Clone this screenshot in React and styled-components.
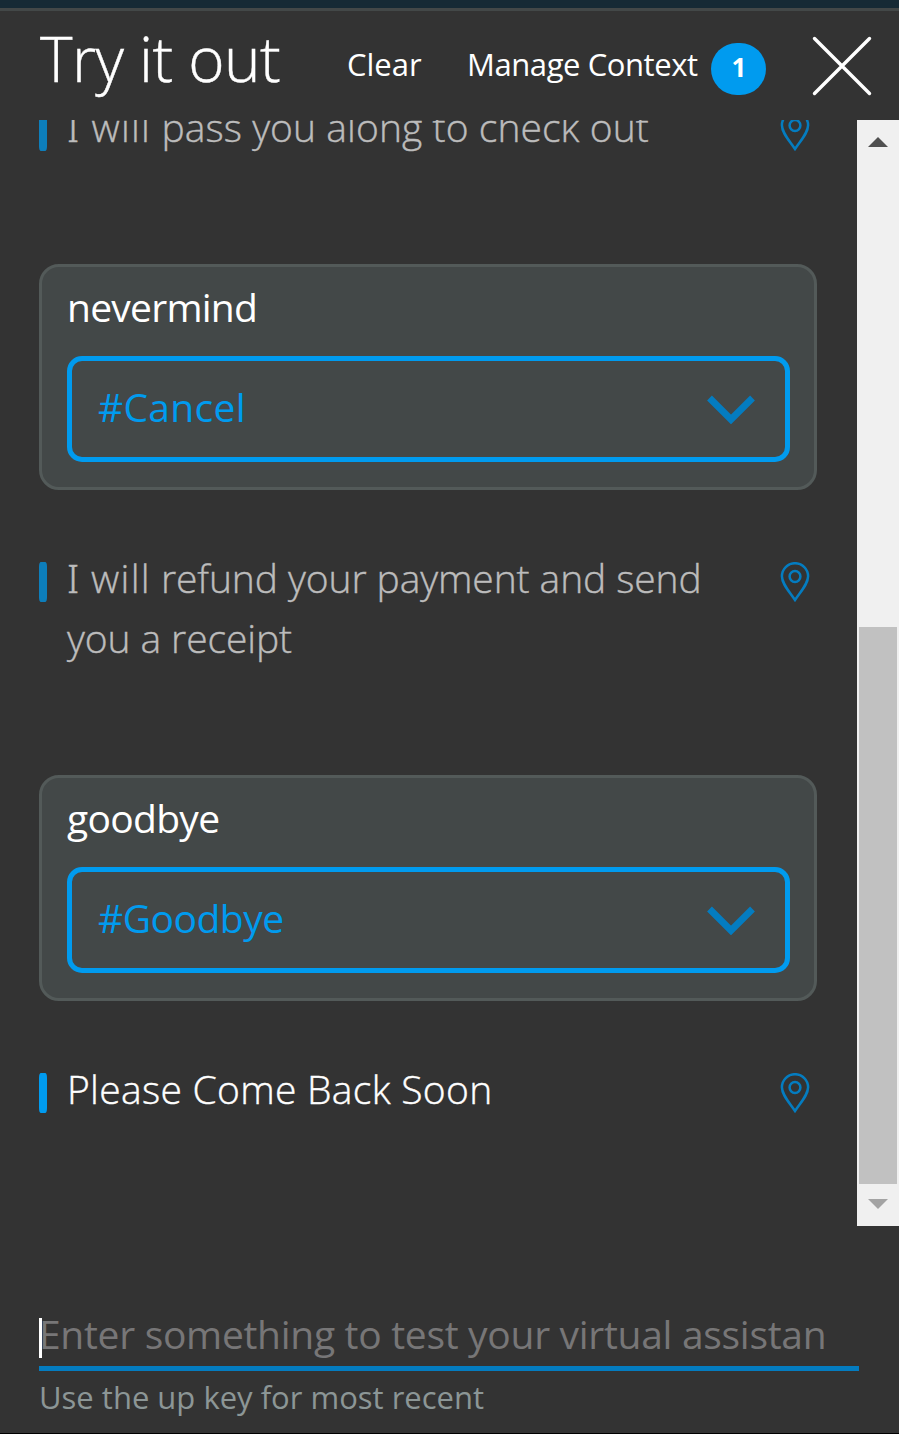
import React from 'react';
import styled, { createGlobalStyle } from 'styled-components';

const GlobalStyle = createGlobalStyle`
  * { box-sizing: border-box; }
  body { margin: 0; background: #333333; font-family: "Open Sans", "Noto Sans", sans-serif; }
`;

const Panel = styled.div`
  display: flex;
  flex-direction: column;
  width: 899px;
  height: 1434px;
  overflow: hidden;
  background: #333333;
  color: #fff;
  border-bottom: 1px solid #000;
`;

const TopStrip = styled.div`
  flex: none;
  height: 11px;
  background: #162a35;
  border-bottom: 3px solid #434848;
`;

const Header = styled.header`
  flex: none;
  display: flex;
  align-items: flex-start;
  height: 109px;
  padding-left: 40px;
`;

const Title = styled.h1`
  margin: 2px 0 0;
  width: 307px;
  font-size: 62px;
  line-height: 90px;
  font-weight: 300;
  letter-spacing: -0.55px;
  white-space: nowrap;
  -webkit-text-stroke: 0.4px currentColor;
`;

const TextButton = styled.button`
  width: ${p => p.$width}px;
  margin: 30px 0 0;
  padding: 0;
  border: 0;
  background: none;
  color: #fff;
  text-align: left;
  white-space: nowrap;
  font: 400 31px/46px "Open Sans", "Noto Sans", sans-serif;
  letter-spacing: ${p => p.$spacing || 0}px;
`;

const Badge = styled.span`
  width: 55px;
  height: 52px;
  margin: 32px 46px 0 0;
  padding-left: 1px;
  border-radius: 26px;
  background: #009bef;
  text-align: center;
  font-size: 26px;
  line-height: 48px;
  font-weight: 700;
`;

const CloseIcon = styled.svg`
  width: 60px;
  height: 60px;
  margin-top: 25px;
`;

const Conversation = styled.div`
  flex: none;
  display: flex;
  height: 1106px;
`;

const Messages = styled.main`
  flex: 1;
  height: 1106px;
  overflow: hidden;
  padding: 0 40px 0 39px;
`;

const Thread = styled.div`
  display: flex;
  flex-direction: column;
  margin-top: -23px;
`;

const Reply = styled.div`
  display: flex;
  align-items: flex-start;
  margin-bottom: 107px;
`;

const Marker = styled.span`
  flex: none;
  width: 8px;
  height: 40px;
  margin: 14px 20px 0 0;
  border-radius: 2px / 5px;
  background: #009bef;
  opacity: ${p => (p.$past ? 0.73 : 1)};
`;

const ReplyText = styled.p`
  flex: 1;
  margin: 0;
  font-size: 39px;
  line-height: 60px;
  font-weight: 300;
  color: ${p => (p.$past ? '#bcbcbc' : '#fff')};
  -webkit-text-stroke: 0.4px currentColor;
`;

const ReplyLine = styled.span`
  display: block;
  white-space: nowrap;
  letter-spacing: ${p => p.$spacing || 0}px;
`;

const SerifI = styled.span`
  margin-right: 2px;
  font-family: "Noto Sans", sans-serif;
`;

const WideWord = styled.span`
  letter-spacing: 1.3px;
`;

const PinIcon = styled.svg`
  flex: none;
  width: 30px;
  height: 41px;
  margin: 14px 7px 0 0;
`;

const Card = styled.section`
  height: 226px;
  margin-bottom: 58px;
  padding: 12px 24px 0 25px;
  border: 3px solid #535a59;
  border-radius: 20px;
  background: #434848;
`;

const Utterance = styled.div`
  height: 77px;
  font-size: 39px;
  line-height: 56px;
  letter-spacing: ${p => p.$spacing}px;
`;

const IntentSelect = styled.button`
  display: flex;
  align-items: center;
  justify-content: space-between;
  width: 723px;
  height: 106px;
  padding: 0 30px 0 26px;
  border: 5px solid #009bef;
  border-radius: 15px;
  background: none;
  color: #009bef;
`;

const IntentName = styled.span`
  padding-bottom: 4px;
  font: 400 39px/56px "Open Sans", "Noto Sans", sans-serif;
  letter-spacing: ${p => p.$spacing}px;
`;

const ChevronIcon = styled.svg`
  width: 48px;
  height: 30px;
`;

const Scrollbar = styled.div`
  flex: none;
  display: flex;
  flex-direction: column;
  align-items: center;
  justify-content: space-between;
  width: 42px;
  background: #f0f0f0;
  padding: 17px 0;
`;

const Thumb = styled.div`
  width: 38px;
  height: 557px;
  margin-top: 465px;
  background: #c1c1c1;
`;

const ArrowIcon = styled.svg`
  width: 20px;
  height: 10px;
`;

const Footer = styled.footer`
  padding: 85px 40px 0 39px;
`;

const InputRow = styled.div`
  display: flex;
  align-items: flex-start;
  height: 60px;
  border-bottom: 5px solid #047cc0;
`;

const Caret = styled.span`
  width: 3px;
  height: 40px;
  margin-top: 7px;
  background: #fff;
`;

const Placeholder = styled.span`
  margin: -4px 0 0 -3px;
  color: #777677;
  font-size: 39px;
  line-height: 54px;
  letter-spacing: -0.3px;
  white-space: nowrap;
`;

const Hint = styled.div`
  margin-top: 3px;
  color: #8c9696;
  font-size: 31px;
  line-height: 46px;
`;

function Pin() {
  return (
    <PinIcon viewBox="0 0 30 41" fill="none" stroke="#047cc0" strokeWidth="2.5">
      <path d="M15 38C8.500 28.500 1.900 21.500 1.900 14.300a13.100 13.100 0 0 1 26.200 0C28.100 21.500 21.500 28.500 15 38z" />
      <circle cx="15" cy="14.500" r="5.400" />
    </PinIcon>
  );
}

function BotReply({ past, children }) {
  return (
    <Reply>
      <Marker $past={past} />
      <ReplyText $past={past}>{children}</ReplyText>
      <Pin />
    </Reply>
  );
}

function UserMessage({ text, textSpacing, intent, intentSpacing }) {
  return (
    <Card>
      <Utterance $spacing={textSpacing}>{text}</Utterance>
      <IntentSelect>
        <IntentName $spacing={intentSpacing}>{intent}</IntentName>
        <ChevronIcon viewBox="0 0 48 30" fill="none" stroke="#047cc0" strokeWidth="6.800">
          <path d="M2.500 4L24 25.500L45.500 4" />
        </ChevronIcon>
      </IntentSelect>
    </Card>
  );
}

export default function App() {
  return (
    <Panel>
      <GlobalStyle />
      <TopStrip />
      <Header>
        <Title>Try it out</Title>
        <TextButton $width={120}>Clear</TextButton>
        <TextButton $width={244} $spacing={-0.42}>Manage Context</TextButton>
        <Badge>1</Badge>
        <CloseIcon viewBox="0 0 60 60" stroke="#fff" strokeWidth="3.400" strokeLinecap="round">
          <path d="M2.500 2.500L57.500 57.500M57.500 2.500L2.500 57.500" />
        </CloseIcon>
      </Header>
      <Conversation>
        <Messages>
          <Thread>
            <BotReply past>
              <ReplyLine $spacing={0.07}><SerifI>I</SerifI> <WideWord>will</WideWord> pass you along to check out</ReplyLine>
            </BotReply>
            <UserMessage text="nevermind" textSpacing={-0.75} intent="#Cancel" intentSpacing={0.3} />
            <BotReply past>
              <ReplyLine $spacing={-0.1}><SerifI>I</SerifI> <WideWord>will</WideWord> refund your payment and send</ReplyLine>
              <ReplyLine $spacing={-0.1}>you a receipt</ReplyLine>
            </BotReply>
            <UserMessage text="goodbye" textSpacing={-0.7} intent="#Goodbye" intentSpacing={-0.5} />
            <BotReply>
              <ReplyLine $spacing={0.3}>Please Come Back Soon</ReplyLine>
            </BotReply>
          </Thread>
        </Messages>
        <Scrollbar>
          <ArrowIcon viewBox="0 0 20 10"><path d="M0 10L10 0L20 10z" fill="#505050" /></ArrowIcon>
          <Thumb />
          <ArrowIcon viewBox="0 0 20 10"><path d="M0 0L10 10L20 0z" fill="#a3a3a3" /></ArrowIcon>
        </Scrollbar>
      </Conversation>
      <Footer>
        <InputRow>
          <Caret />
          <Placeholder>Enter something to test your virtual assistan</Placeholder>
        </InputRow>
        <Hint>Use the up key for most recent</Hint>
      </Footer>
    </Panel>
  );
}
